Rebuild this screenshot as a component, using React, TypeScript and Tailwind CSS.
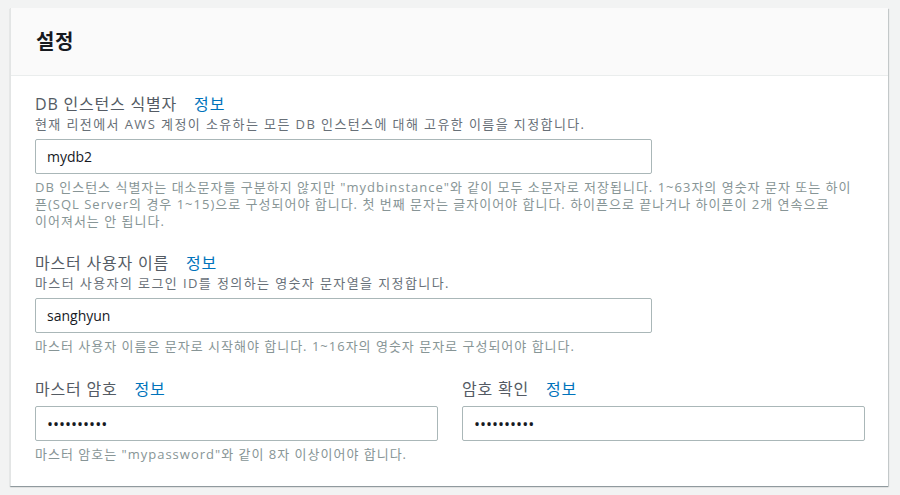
import React from "react";

const FONT = {
  fontFamily: '"Open Sans", "Noto Sans CJK KR", sans-serif',
};

const Label = ({ text }: { text: string }) => (
  <div className="flex items-center gap-[17px] text-[16px] leading-[20px] tracking-[0.8px] text-[#545b64]">
    <span>{text}</span>
    <a className="text-[#0073bb]">정보</a>
  </div>
);

const Input = ({ value, password }: { value: string; password?: boolean }) => (
  <div className="h-[35px] w-full rounded-[2px] border border-[#aab7b8] bg-white px-[11px] flex items-center text-[14px] text-[#16191f]">
    {password ? <span className="text-[16px] leading-none">••••••••••</span> : value}
  </div>
);

const Desc = ({ children }: { children: React.ReactNode }) => (
  <div className="mt-[2px] text-[13px] leading-[17px] tracking-[1.4px] text-[#687078]">{children}</div>
);

const Help = ({ children }: { children: React.ReactNode }) => (
  <div className="mt-[5px] text-[13px] leading-[16.75px] tracking-[1px] text-[#879596]">{children}</div>
);

export default function App() {
  return (
    <div style={FONT} className="min-h-[495px] w-[900px] bg-[#f2f3f3] pt-[8px] pl-[10px]">
      <div className="w-[878px] bg-white border-l border-[#e3e5e5] shadow-[0_1px_1px_0_rgba(0,28,36,0.3),1px_1px_1px_0_rgba(0,28,36,0.15)]">
        <div className="h-[68px] bg-[#fafafa] border-b border-[#eaeded] flex items-center pl-[25px]">
          <h2 className="text-[20px] font-bold text-[#16191f] tracking-[0.5px]">설정</h2>
        </div>
        <div className="pl-[24px] pr-[23px] pt-[18px] pb-[23px]">
          <Label text="DB 인스턴스 식별자" />
          <Desc>현재 리전에서 AWS 계정이 소유하는 모든 DB 인스턴스에 대해 고유한 이름을 지정합니다.</Desc>
          <div className="mt-[6px] w-[617px]">
            <Input value="mydb2" />
          </div>
          <Help>
            DB 인스턴스 식별자는 대소문자를 구분하지 않지만 "mydbinstance"와 같이 모두 소문자로 저장됩니다. 1~63자의 영숫자 문자 또는 하이
            <br />
            픈(SQL Server의 경우 1~15)으로 구성되어야 합니다. 첫 번째 문자는 글자이어야 합니다. 하이픈으로 끝나거나 하이픈이 2개 연속으로
            <br />
            이어져서는 안 됩니다.
          </Help>

          <div className="mt-[24px]">
            <Label text="마스터 사용자 이름" />
          </div>
          <Desc>마스터 사용자의 로그인 ID를 정의하는 영숫자 문자열을 지정합니다.</Desc>
          <div className="mt-[6px] w-[617px]">
            <Input value="sanghyun" />
          </div>
          <Help>마스터 사용자 이름은 문자로 시작해야 합니다. 1~16자의 영숫자 문자로 구성되어야 합니다.</Help>

          <div className="mt-[24px] grid grid-cols-2 gap-x-[24px]">
            <div>
              <Label text="마스터 암호" />
              <div className="mt-[7px]">
                <Input value="" password />
              </div>
              <Help>마스터 암호는 "mypassword"와 같이 8자 이상이어야 합니다.</Help>
            </div>
            <div>
              <Label text="암호 확인" />
              <div className="mt-[7px]">
                <Input value="" password />
              </div>
            </div>
          </div>
        </div>
      </div>
    </div>
  );
}
